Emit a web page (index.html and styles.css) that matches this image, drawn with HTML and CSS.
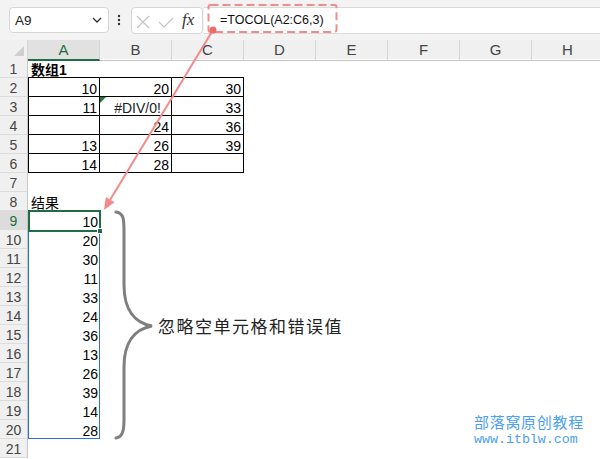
FILE: index.html
```html
<!DOCTYPE html>
<html lang="zh">
<head>
<meta charset="utf-8">
<link rel="stylesheet" href="styles.css">
</head>
<body>
<div class="topbar">
  <div class="namebox"><span>A9</span>
    <svg width="10" height="6" viewBox="0 0 10 6"><path d="M1 1 L5 5 L9 1" fill="none" stroke="#333" stroke-width="1.3"/></svg>
  </div>
  <div class="sep"><svg width="4" height="12" viewBox="0 0 4 12"><circle cx="2" cy="2" r="1.2" fill="#333"/><circle cx="2" cy="6" r="1.2" fill="#333"/><circle cx="2" cy="10" r="1.2" fill="#333"/></svg></div>
  <div class="fxbox">
    <svg class="ic" width="46" height="27" viewBox="0 0 46 27"><path d="M6 9 L18 21 M18 9 L6 21" stroke="#c4c4c4" stroke-width="1.2" fill="none"/><path d="M28 15 L33 20 L42 11" stroke="#c4c4c4" stroke-width="1.2" fill="none"/></svg>
    <span class="fx">fx</span>
  </div>
  <div class="formula">=TOCOL(A2:C6,3)</div>
</div>

<div class="sheet">
  <div class="hrow">
    <div class="corner"><svg width="10" height="10" viewBox="0 0 10 10"><path d="M10 0 L10 10 L0 10 Z" fill="#cfcfcf"/></svg></div>
    <div class="ch act">A</div><div class="ch">B</div><div class="ch">C</div><div class="ch">D</div><div class="ch">E</div><div class="ch">F</div><div class="ch">G</div><div class="ch">H</div>
  </div>
  <div class="row"><div class="rh">1</div><div class="c bb bold">数组1</div><div class="c bb"></div><div class="c bb"></div></div>
  <div class="row"><div class="rh">2</div><div class="c r b bl">10</div><div class="c r b">20</div><div class="c r b">30</div></div>
  <div class="row"><div class="rh">3</div><div class="c r b bl">11</div><div class="c b err">#DIV/0!</div><div class="c r b">33</div></div>
  <div class="row"><div class="rh">4</div><div class="c r b bl"></div><div class="c r b">24</div><div class="c r b">36</div></div>
  <div class="row"><div class="rh">5</div><div class="c r b bl">13</div><div class="c r b">26</div><div class="c r b">39</div></div>
  <div class="row"><div class="rh">6</div><div class="c r b bl">14</div><div class="c r b">28</div><div class="c r b"></div></div>
  <div class="row"><div class="rh">7</div></div>
  <div class="row"><div class="rh">8</div><div class="c">结果</div></div>
  <div class="row"><div class="rh act">9</div><div class="c r sp sel">10</div></div>
  <div class="row"><div class="rh">10</div><div class="c r sp">20</div></div>
  <div class="row"><div class="rh">11</div><div class="c r sp">30</div></div>
  <div class="row"><div class="rh">12</div><div class="c r sp">11</div></div>
  <div class="row"><div class="rh">13</div><div class="c r sp">33</div></div>
  <div class="row"><div class="rh">14</div><div class="c r sp">24</div></div>
  <div class="row"><div class="rh">15</div><div class="c r sp">36</div></div>
  <div class="row"><div class="rh">16</div><div class="c r sp">13</div></div>
  <div class="row"><div class="rh">17</div><div class="c r sp">26</div></div>
  <div class="row"><div class="rh">18</div><div class="c r sp">39</div></div>
  <div class="row"><div class="rh">19</div><div class="c r sp">14</div></div>
  <div class="row"><div class="rh">20</div><div class="c r sp spb">28</div></div>
  <div class="row"><div class="rh">21</div></div>
</div>

<svg class="overlay" width="600" height="459" viewBox="0 0 600 459">
  <rect x="208.5" y="5" width="128" height="27" rx="2" fill="none" stroke="#f08c8c" stroke-width="2" stroke-dasharray="8 4"/>
  <line x1="213" y1="30" x2="110.2" y2="199.7" stroke="#f28a8a" stroke-width="2"/>
  <path d="M104 210 L114.5 202.3 L105.9 197.1 Z" fill="#f28a8a"/>
  <circle cx="213" cy="30" r="3.5" fill="#ec6a6a"/>
  <path d="M116 212 C124 213 124 220 124 232 L124 285 C124 310 135 323 152 326 C135 329 124 342 124 367 L124 420 C124 432 122 437 116 438" fill="none" stroke="#7f7f7f" stroke-width="3" stroke-linecap="round"/>
</svg>
<div class="note">忽略空单元格和错误值</div>
<div class="wm"><div class="wm1">部落窝原创教程</div><div class="wm2">www.itblw.com</div></div>
</body>
</html>
```
FILE: styles.css
```css
body {
  margin: 0;
  width: 600px;
  height: 459px;
  overflow: hidden;
  position: relative;
  background: #fff;
  font-family: "Liberation Sans", "Noto Sans CJK SC", sans-serif;
}
.topbar {
  height: 40px;
  box-sizing: border-box;
  background: #f3f3f3;
  display: flex;
  align-items: center;
  padding-left: 9px;
}
.namebox {
  width: 100px;
  height: 26px;
  box-sizing: border-box;
  border: 1px solid #d6d6d6;
  border-radius: 4px;
  background: #fff;
  display: flex;
  align-items: center;
  justify-content: space-between;
  padding: 0 6px 0 5px;
  font-size: 13.5px;
  color: #222;
}
.sep {
  width: 20px;
  display: flex;
  justify-content: center;
}
.fxbox {
  margin-left: 2px;
  width: 72px;
  height: 27px;
  box-sizing: border-box;
  border: 1px solid #d6d6d6;
  border-radius: 4px;
  background: #fff;
  display: flex;
  align-items: center;
}
.ic { margin-left: -1px; }
.fx {
  margin-left: 5px;
  font-family: "Liberation Serif", serif;
  font-style: italic;
  font-size: 17px;
  color: #333;
}
.formula {
  flex: 1;
  height: 27px;
  box-sizing: border-box;
  margin-left: 1px;
  background: #fff;
  border-top: 1px solid #dadada;
  border-bottom: 1px solid #dadada;
  padding-left: 16px;
  font-size: 12.5px;
  line-height: 25px;
  color: #111;
}
.sheet {
  width: 600px;
  overflow: hidden;
}
.hrow {
  display: grid;
  grid-template-columns: 28px repeat(8, 72px);
  height: 20px;
  background: #f0f0f0;
  border-top: 1px solid #e4e4e4;
  box-sizing: border-box;
  height: 20px;
  margin-top: -1px;
}
.corner {
  border-right: 1px solid #d5d5d5;
  border-bottom: 1px solid #c4c4c4;
  display: flex;
  align-items: flex-end;
  justify-content: flex-end;
  padding: 0 3px 4px 0;
}
.ch {
  border-right: 1px solid #d5d5d5;
  border-bottom: 1px solid #c4c4c4;
  text-align: center;
  font-size: 15px;
  line-height: 18px;
  padding-top: 1px;
  color: #444;
}
.ch.act {
  background: #e1e1e1;
  color: #1e6e42;
  border-bottom: 2px solid #1e6e42;
}
.row {
  display: grid;
  grid-template-columns: 28px repeat(8, 72px);
  height: 19px;
}
.rh {
  background: #f0f0f0;
  border-right: 1px solid #c6c6c6;
  border-bottom: 1px solid #dcdcdc;
  text-align: center;
  font-size: 14px;
  line-height: 15px;
  padding-top: 3px;
  color: #444;
}
.rh.act {
  background: #dcdcdc;
  color: #1e6e42;
}
.c {
  box-sizing: border-box;
  height: 19px;
  padding: 4px 2px 0 3px;
  line-height: 15px;
  font-size: 14px;
  white-space: nowrap;
  color: #000;
}
.r { text-align: right; }
.bold { font-weight: bold; }
.b {
  border-right: 1px solid #000;
  border-bottom: 1px solid #000;
}
.bl { border-left: 1px solid #000; }
.bb { border-bottom: 1px solid #000; }
.err {
  position: relative;
  text-align: center;
  color: #222;
  padding-left: 6px;
  overflow: visible;
}
.err::before {
  content: "";
  position: absolute;
  left: 0;
  top: 0;
  border-top: 6px solid #1e7a3c;
  border-right: 6px solid transparent;
}
.sp {
  border-left: 1px solid #2f6fd0;
  border-right: 1px solid #2f6fd0;
  padding-right: 1px;
}
.spb { border-bottom: 1px solid #2f6fd0; }
.sel { position: relative; }
.sel::after {
  content: "";
  position: absolute;
  left: -1px;
  top: -1px;
  right: -2px;
  bottom: -2px;
  border: 2px solid #1e6e42;
}
.sel::before {
  content: "";
  position: absolute;
  right: -4px;
  bottom: -4px;
  width: 4px;
  height: 4px;
  background: #1e6e42;
  border: 1px solid #fff;
  z-index: 1;
}
.overlay {
  position: absolute;
  left: 0;
  top: 0;
  pointer-events: none;
}
.note {
  position: absolute;
  left: 158px;
  top: 317px;
  font-family: "Noto Sans CJK SC", sans-serif;
  font-size: 17px;
  line-height: 17px;
  letter-spacing: 1.5px;
  color: #222;
}
.wm {
  position: absolute;
  left: 474px;
  top: 413px;
  color: #4a9ff2;
}
.wm1 {
  font-family: "Noto Sans CJK SC", sans-serif;
  font-size: 15px;
  line-height: 18px;
  letter-spacing: 0.7px;
}
.wm2 {
  font-family: "Liberation Mono", monospace;
  font-size: 13.3px;
  line-height: 18px;
}
```
